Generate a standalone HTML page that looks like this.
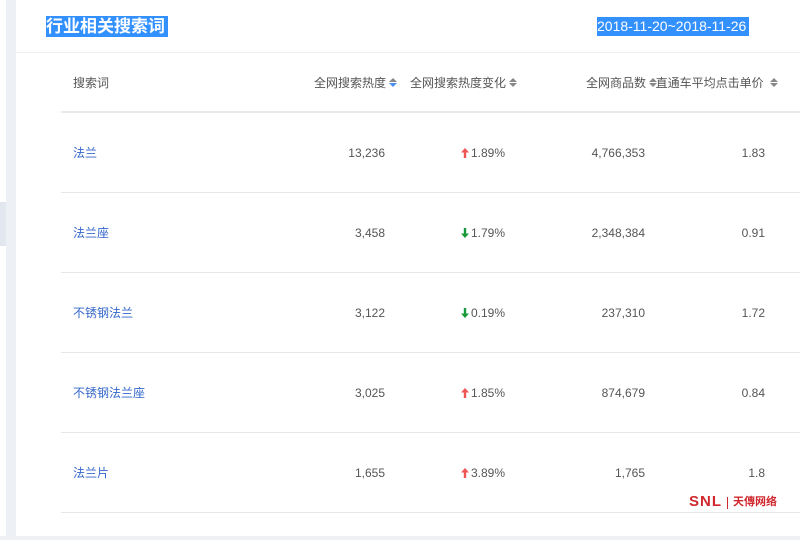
<!DOCTYPE html>
<html><head><meta charset="utf-8"><style>
body{margin:0;width:800px;height:540px;background:#fff;position:relative;overflow:hidden;font-family:"Liberation Sans","Noto Sans CJK SC",sans-serif;}
.a{position:absolute;white-space:nowrap;line-height:16px;}
.sel{background:#3390ff;color:#fff;}
.h{font-size:12px;color:#555;}
.c{font-size:12px;color:#555;}
.l{color:#3366cc;font-size:12px;}
.line{position:absolute;left:61px;right:0;height:1px;background:#e8e8e8;}
.s{display:inline-block;width:8px;height:10px;vertical-align:-1px;margin-left:3px;position:relative}
.s:before{content:"";position:absolute;left:0;top:0;border:4px solid transparent;border-top:0;border-bottom:4px solid #888;}
.s:after{content:"";position:absolute;left:0;top:5px;border:4px solid transparent;border-bottom:0;border-top:4px solid #888;}
.s.b:after{border-top-color:#4a8ff0}
svg{vertical-align:-1px;margin-right:2px}
</style></head><body>
<div class="a" style="left:6px;top:0;width:10px;height:540px;background:#edf0f5"></div>
<div class="a" style="left:0;top:202px;width:6px;height:44px;background:#e3e8f0"></div>
<div class="a" style="left:0;top:536px;width:800px;height:4px;background:#eef0f3"></div>
<div class="a sel" style="left:46px;top:16px;font-size:17px;height:21px;line-height:21px;padding-right:3px;font-weight:bold">行业相关搜索词</div>
<div class="a sel" style="left:597px;top:17px;font-size:14px;height:19px;line-height:19px;padding-right:3px">2018-11-20~2018-11-26</div>
<div class="a" style="left:16px;right:0;top:52px;height:1px;background:#eee"></div>
<div class="a h" style="left:73px;top:75px">搜索词</div>
<div class="a h" style="right:403px;top:75px">全网搜索热度<span class="s b"></span></div>
<div class="a h" style="right:283px;top:75px">全网搜索热度变化<span class="s"></span></div>
<div class="a h" style="right:143px;top:75px">全网商品数<span class="s"></span></div>
<div class="a h" style="right:22px;top:75px">直通车平均点击单价 <span class="s"></span></div>
<div class="line" style="top:111px;height:2px;background:#eaeaea"></div>

<div class="a l" style="left:73px;top:145px">法兰</div><div class="a c" style="right:415px;top:145px">13,236</div><div class="a c" style="right:295px;top:145px"><svg width="8" height="10" viewBox="0 0 8 10"><path d="M4 0L8 4.5H5.2V10H2.8V4.5H0Z" fill="#e55"/></svg>1.89%</div><div class="a c" style="right:155px;top:145px">4,766,353</div><div class="a c" style="right:35px;top:145px">1.83</div>
<div class="line" style="top:192px"></div>
<div class="a l" style="left:73px;top:225px">法兰座</div><div class="a c" style="right:415px;top:225px">3,458</div><div class="a c" style="right:295px;top:225px"><svg width="8" height="10" viewBox="0 0 8 10"><path d="M4 10L8 5.5H5.2V0H2.8V5.5H0Z" fill="#1a9a3a"/></svg>1.79%</div><div class="a c" style="right:155px;top:225px">2,348,384</div><div class="a c" style="right:35px;top:225px">0.91</div>
<div class="line" style="top:272px"></div>
<div class="a l" style="left:73px;top:305px">不锈钢法兰</div><div class="a c" style="right:415px;top:305px">3,122</div><div class="a c" style="right:295px;top:305px"><svg width="8" height="10" viewBox="0 0 8 10"><path d="M4 10L8 5.5H5.2V0H2.8V5.5H0Z" fill="#1a9a3a"/></svg>0.19%</div><div class="a c" style="right:155px;top:305px">237,310</div><div class="a c" style="right:35px;top:305px">1.72</div>
<div class="line" style="top:352px"></div>
<div class="a l" style="left:73px;top:385px">不锈钢法兰座</div><div class="a c" style="right:415px;top:385px">3,025</div><div class="a c" style="right:295px;top:385px"><svg width="8" height="10" viewBox="0 0 8 10"><path d="M4 0L8 4.5H5.2V10H2.8V4.5H0Z" fill="#e55"/></svg>1.85%</div><div class="a c" style="right:155px;top:385px">874,679</div><div class="a c" style="right:35px;top:385px">0.84</div>
<div class="line" style="top:432px"></div>
<div class="a l" style="left:73px;top:465px">法兰片</div><div class="a c" style="right:415px;top:465px">1,655</div><div class="a c" style="right:295px;top:465px"><svg width="8" height="10" viewBox="0 0 8 10"><path d="M4 0L8 4.5H5.2V10H2.8V4.5H0Z" fill="#e55"/></svg>3.89%</div><div class="a c" style="right:155px;top:465px">1,765</div><div class="a c" style="right:35px;top:465px">1.8</div>
<div class="line" style="top:512px"></div>
<div class="a" style="left:689px;top:494px;color:#d0282e;font-weight:bold;font-size:15px;letter-spacing:1px">SNL</div>
<div class="a" style="left:727px;top:497px;width:1px;height:12px;background:#d0282e"></div>
<div class="a" style="left:733px;top:494px;color:#d0282e;font-weight:bold;font-size:11px">天傳网络</div>
</body></html>
